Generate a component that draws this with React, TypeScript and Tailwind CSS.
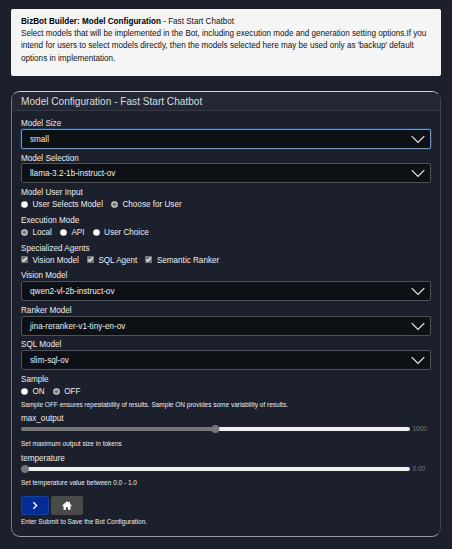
import React from "react";

function Label({ children, className = "" }: { children: React.ReactNode; className?: string }) {
  return <div className={`h-[12px] text-[8.15px] leading-[14px] whitespace-nowrap ${className}`}>{children}</div>;
}

function Select({ value, focused = false }: { value: string; focused?: boolean }) {
  return (
    <div
      className={`flex h-[20px] w-[410px] items-center justify-between rounded-[2px] border bg-[#0d1115] pr-[5px] pl-[8px] text-[8.15px] ${
        focused ? "border-[#7595bd] shadow-[0_0_0_1px_#153a66]" : "border-[#50525a]"
      }`}
    >
      <span className="pt-[2px] leading-[12px] whitespace-nowrap">{value}</span>
      <svg width="14" height="9" viewBox="0 0 14 9" fill="none" stroke="#eeeeee" strokeWidth="1.15">
        <path d="M0.7 1.2 L7 7.5 L13.3 1.2" />
      </svg>
    </div>
  );
}

function Radio({ label, checked = false, className = "" }: { label: string; checked?: boolean; className?: string }) {
  return (
    <div className={`flex items-center ${className}`}>
      <svg width="7" height="7" viewBox="0 0 7 7" className="mr-[4.5px] shrink-0">
        <circle cx="3.5" cy="3.5" r="3.3" fill={checked ? "#d2d2d2" : "#ffffff"} />
        {checked && <circle cx="3.5" cy="3.5" r="2.1" fill="#777777" />}
      </svg>
      <span className="pt-[2px] whitespace-nowrap">{label}</span>
    </div>
  );
}

function Check({ label, className = "" }: { label: string; className?: string }) {
  return (
    <div className={`flex items-center ${className}`}>
      <svg width="7" height="7" viewBox="0 0 7 7" className="mr-[4.5px] mb-[1px] shrink-0">
        <rect width="7" height="7" rx="0.8" fill="#777777" />
        <path d="M1.3 3.7 L2.8 5.2 L5.8 1.7" fill="none" stroke="#ffffff" strokeWidth="1.2" />
      </svg>
      <span className="pt-[2px] whitespace-nowrap">{label}</span>
    </div>
  );
}

function Slider({ fraction, value }: { fraction: number; value: string }) {
  return (
    <div className="flex h-[10px] items-center">
      <svg width="389" height="8" viewBox="0 0 389 8" className="shrink-0">
        <rect x="0.5" y="2" width="388.5" height="4" rx="2" fill="#efefef" />
        <rect x="0.5" y="2" width={4 + fraction * 381} height="4" rx="1.5" fill="#777777" />
        <circle cx={4 + fraction * 381} cy="4" r="3.9" fill="#777777" />
      </svg>
      <span className="ml-[2.5px] text-[6.5px] leading-[10px] text-[#777a80]">{value}</span>
    </div>
  );
}

const row = "flex h-[12px] items-center text-[8.15px] leading-[12px]";
const hint = "h-[10px] text-[6.5px] leading-[10px] whitespace-nowrap";

export default function App() {
  return (
    <div className="h-[549px] w-[452px] overflow-hidden bg-[#1c1f2c] pt-[9px] pl-[10.5px] font-['Liberation_Sans',Arial,sans-serif] text-[#eeeeee]">
      <div className="h-[67px] w-[430.5px] rounded-[2px] bg-[#f5f5f5] pt-[7px] pl-[10.5px] text-[8.15px] leading-[12.2px] whitespace-nowrap text-[#111111]">
        <p>
          <b className="text-black">BizBot Builder: Model Configuration</b> - Fast Start Chatbot
        </p>
        <p className="tracking-[-0.01px]">Select models that will be implemented in the Bot, including execution mode and generation setting options.If you</p>
        <p>intend for users to select models directly, then the models selected here may be used only as 'backup' default</p>
        <p>options in implementation.</p>
      </div>

      <div className="mt-[15px] h-[446px] w-[430.5px] overflow-hidden rounded-[9px] border border-t-[#d5d5d8] border-r-[#42444f] border-b-[#9b9ca2] border-l-[#777981]">
        <div className="h-[19px] border-b border-[#363945] bg-[#242734] pl-[9.5px] text-[10.1px] leading-[19px] text-[#dcdcde]">
          Model Configuration - Fast Start Chatbot
        </div>
        <div className="pl-[9.5px]">
          <Label className="mt-[6px]">Model Size</Label>
          <Select value="small" focused />
          <Label className="mt-[3px] mb-[-1px]">Model Selection</Label>
          <Select value="llama-3.2-1b-instruct-ov" />
          <Label className="mt-[3px]">Model User Input</Label>
          <div className={row}>
            <Radio label="User Selects Model" />
            <Radio label="Choose for User" checked className="ml-[8px]" />
          </div>
          <Label className="mt-[4px]">Execution Mode</Label>
          <div className={row}>
            <Radio label="Local" checked />
            <Radio label="API" className="ml-[8px]" />
            <Radio label="User Choice" className="ml-[8px]" />
          </div>
          <Label className="mt-[4px]">Specialized Agents</Label>
          <div className={row}>
            <Check label="Vision Model" />
            <Check label="SQL Agent" className="ml-[8px]" />
            <Check label="Semantic Ranker" className="ml-[8px]" />
          </div>
          <Label className="mt-[3px]">Vision Model</Label>
          <Select value="qwen2-vl-2b-instruct-ov" />
          <Label className="mt-[3px]">Ranker Model</Label>
          <Select value="jina-reranker-v1-tiny-en-ov" />
          <Label className="mt-[2px]">SQL Model</Label>
          <Select value="slim-sql-ov" />
          <Label className="mt-[3px]">Sample</Label>
          <div className={row}>
            <Radio label="ON" />
            <Radio label="OFF" checked className="ml-[8px]" />
          </div>
          <div className={`mt-[3px] ${hint}`}>
            Sample OFF ensures repeatability of results. Sample ON provides some variability of results.
          </div>
          <Label className="mt-[2px]">max_output</Label>
          <Slider fraction={0.5} value="1000" />
          <div className={`mt-[5px] ${hint}`}>Set maximum output size in tokens</div>
          <Label className="mt-[3px]">temperature</Label>
          <Slider fraction={0} value="0.00" />
          <div className={`mt-[4px] ${hint}`}>Set temperature value between 0.0 - 1.0</div>
          <div className="mt-[8px] flex gap-[2px]">
            <div className="flex h-[19px] w-[28px] items-center justify-center rounded-[2px] border border-[#174395] bg-[#032c96]">
              <svg width="8" height="9" viewBox="0 0 8 9" fill="none" stroke="#ffffff" strokeWidth="1.4">
                <path d="M2.3 1.3 L5.6 4.5 L2.3 7.7" />
              </svg>
            </div>
            <div className="flex h-[19px] w-[32px] items-center justify-center rounded-[2px] bg-[#4a4a4a]">
              <svg width="10" height="9" viewBox="0 0 10 9" fill="#ffffff">
                <path d="M5 0.2 L6.8 1.8 V0.8 H8 V2.9 L9.8 4.6 L9.2 5.2 L8.5 4.6 V8.2 Q8.5 8.8 7.9 8.8 H6 V6.3 H4 V8.8 H2.1 Q1.5 8.8 1.5 8.2 V4.6 L0.8 5.2 L0.2 4.6 Z" />
              </svg>
            </div>
          </div>
          <div className={`mt-[2px] ${hint}`}>Enter Submit to Save the Bot Configuration.</div>
        </div>
      </div>
    </div>
  );
}
